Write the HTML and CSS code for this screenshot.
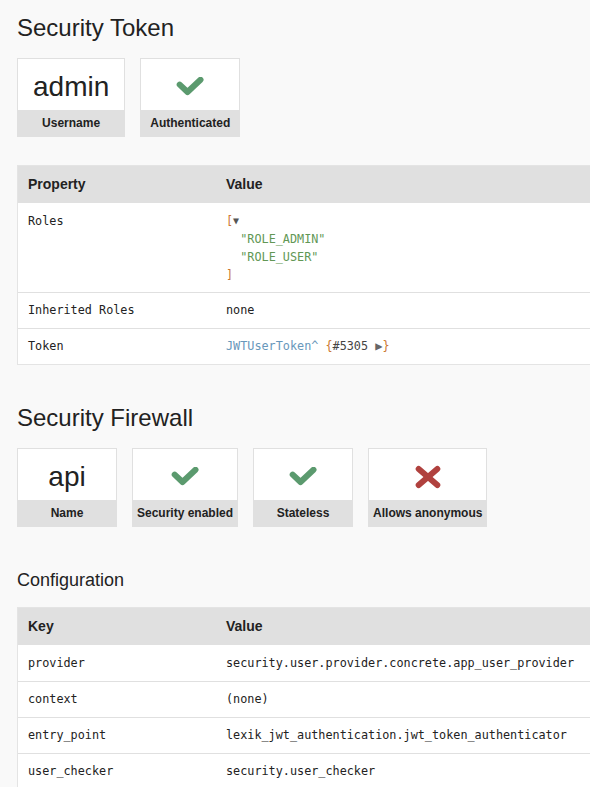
FILE: index.html
```html
<!DOCTYPE html>
<html>
<head>
<meta charset="utf-8">
<link rel="stylesheet" href="styles.css">
</head>
<body>
<div class="page">
  <h2>Security Token</h2>
  <div class="metrics">
    <div class="metric">
      <span class="value">admin</span>
      <span class="label">Username</span>
    </div>
    <div class="metric">
      <span class="value"><svg class="icon-yes" width="28" height="20" viewBox="0 0 28 20"><polyline points="3.7,7.6 11.5,15 24.5,2.8" fill="none" stroke="#5b9a6e" stroke-width="6" stroke-linecap="round" stroke-linejoin="round"/></svg></span>
      <span class="label">Authenticated</span>
    </div>
  </div>

  <table class="tbl">
    <thead>
      <tr><th class="key">Property</th><th>Value</th></tr>
    </thead>
    <tbody>
      <tr>
        <td class="mono">Roles</td>
        <td><pre class="dump"><span class="d-n">[</span><span class="d-toggle">▼</span>
  <span class="d-s">"ROLE_ADMIN"</span>
  <span class="d-s">"ROLE_USER"</span>
<span class="d-n">]</span></pre></td>
      </tr>
      <tr>
        <td class="mono">Inherited Roles</td>
        <td class="mono">none</td>
      </tr>
      <tr>
        <td class="mono">Token</td>
        <td><pre class="dump"><span class="d-c">JWTUserToken^</span> <span class="d-n">{</span><span class="d-ref">#5305</span> <span class="d-arrow">▶</span><span class="d-n">}</span></pre></td>
      </tr>
    </tbody>
  </table>

  <h2>Security Firewall</h2>
  <div class="metrics">
    <div class="metric">
      <span class="value">api</span>
      <span class="label">Name</span>
    </div>
    <div class="metric">
      <span class="value"><svg width="28" height="20" viewBox="0 0 28 20"><polyline points="3.7,7.6 11.5,15 24.5,2.8" fill="none" stroke="#5b9a6e" stroke-width="6" stroke-linecap="round" stroke-linejoin="round"/></svg></span>
      <span class="label">Security enabled</span>
    </div>
    <div class="metric">
      <span class="value"><svg width="28" height="20" viewBox="0 0 28 20"><polyline points="3.7,7.6 11.5,15 24.5,2.8" fill="none" stroke="#5b9a6e" stroke-width="6" stroke-linecap="round" stroke-linejoin="round"/></svg></span>
      <span class="label">Stateless</span>
    </div>
    <div class="metric">
      <span class="value"><svg width="26" height="24" viewBox="0 0 26 24"><path d="M3.7 4 L22.3 20 M22.3 4 L3.7 20" fill="none" stroke="#b0413e" stroke-width="6" stroke-linecap="round"/></svg></span>
      <span class="label">Allows anonymous</span>
    </div>
  </div>

  <h3>Configuration</h3>
  <table class="tbl">
    <thead>
      <tr><th class="key">Key</th><th>Value</th></tr>
    </thead>
    <tbody>
      <tr><td class="mono">provider</td><td class="mono">security.user.provider.concrete.app_user_provider</td></tr>
      <tr><td class="mono">context</td><td class="mono">(none)</td></tr>
      <tr><td class="mono">entry_point</td><td class="mono">lexik_jwt_authentication.jwt_token_authenticator</td></tr>
      <tr><td class="mono">user_checker</td><td class="mono">security.user_checker</td></tr>
    </tbody>
  </table>
</div>
</body>
</html>
```

FILE: styles.css
```css
html, body {
  margin: 0;
  padding: 0;
  background: #f9f9f9;
  color: #222;
  font-family: "Liberation Sans", Arial, sans-serif;
}

.page {
  width: 590px;
  height: 787px;
  overflow: hidden;
  box-sizing: border-box;
  padding: 13px 0 0 17px;
}

h2 {
  font-size: 24px;
  line-height: 29px;
  font-weight: normal;
  margin: 0 0 16px;
}

h3 {
  font-size: 18px;
  line-height: 22px;
  font-weight: normal;
  margin: 42px 0 16px;
}

.metrics {
  display: flex;
  align-items: flex-start;
  gap: 15px;
  margin-bottom: 28px;
}

.metric {
  display: flex;
  flex-direction: column;
  min-width: 100px;
  box-sizing: border-box;
  background: #fff;
  border: 1px solid #e0e0e0;
  text-align: center;
}

.metric .value {
  display: flex;
  align-items: center;
  justify-content: center;
  height: 51px;
  box-sizing: border-box;
  padding: 4px 15px 0;
  font-size: 28px;
}

.metric .value svg {
  display: block;
}

.metric .label {
  display: block;
  height: 26px;
  line-height: 26px;
  padding: 0 4px;
  background: #e0e0e0;
  font-size: 12px;
  font-weight: bold;
  white-space: nowrap;
}

.tbl {
  width: 800px;
  table-layout: fixed;
  border-collapse: separate;
  border-spacing: 0;
  background: #fff;
  border: 1px solid #e4e4e4;
  margin: 0 0 38px;
}

.tbl th {
  background: #e0e0e0;
  text-align: left;
  font-size: 14px;
  font-weight: bold;
  line-height: 21px;
  padding: 8px 10px;
}

.tbl th.key {
  width: 178px;
}

.tbl td {
  border-top: 1px solid #e0e0e0;
  padding: 8px 10px;
  font-size: 13px;
  line-height: 19px;
  vertical-align: top;
  white-space: nowrap;
}

.tbl tbody tr:first-child td {
  border-top: 0;
  padding-top: 9px;
}

.tbl td.mono,
.tbl td .dump {
  font-family: "DejaVu Sans Mono", "Liberation Mono", monospace;
  font-size: 11.8px;
}

.tbl td .dump {
  margin: 0;
  line-height: 19px;
}

.tbl tbody tr:first-child .dump {
  line-height: 18px;
}

.d-n { color: #cc7832; }
.d-s { color: #629755; font-weight: 500; }
.d-c { color: #6897bb; }
.d-ref { color: #444; }
.d-toggle {
  color: #555;
  font-size: 10px;
  vertical-align: top;
}
.d-arrow {
  color: #666;
  font-size: 12px;
}
```
